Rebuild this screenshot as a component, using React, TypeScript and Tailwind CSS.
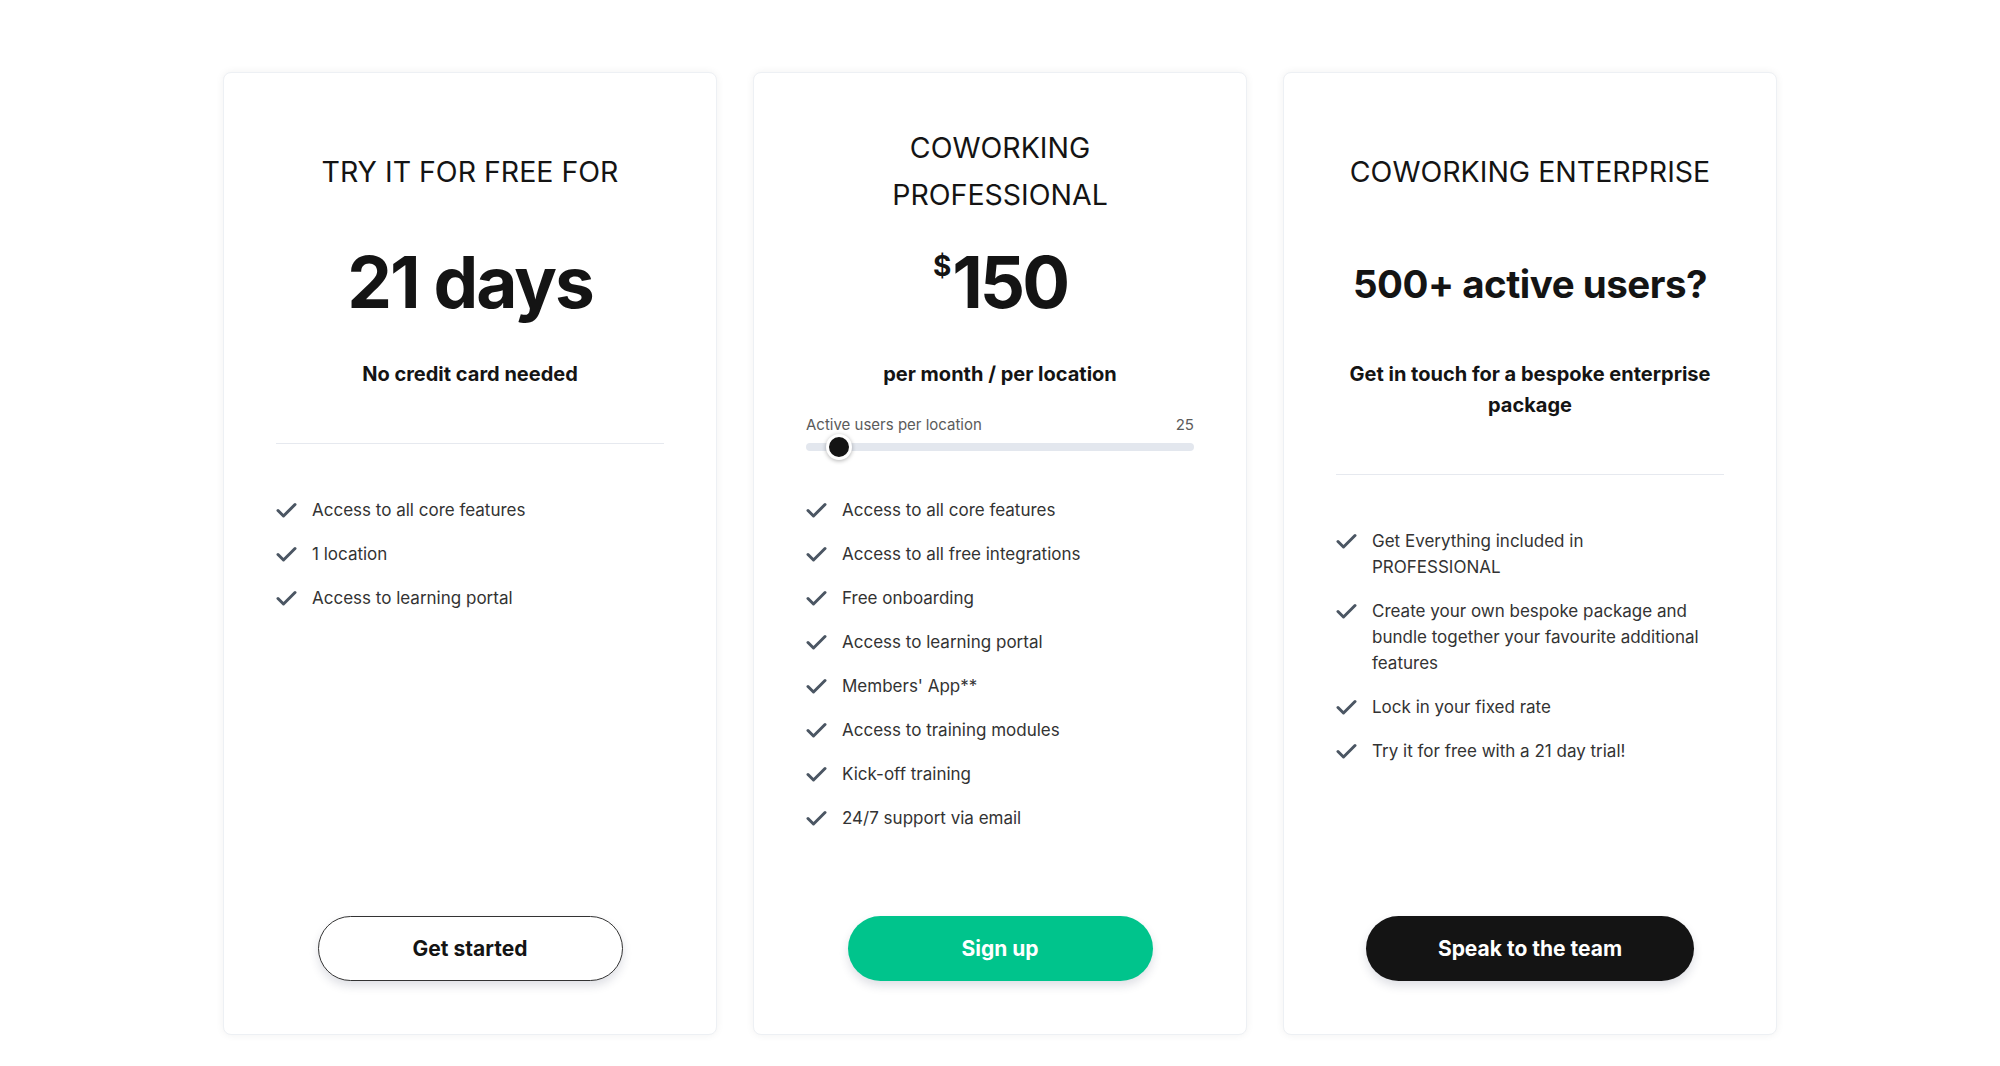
import React from 'react'

const font = { fontFamily: 'Inter, Lato, sans-serif' }

function Check() {
    return (
        <svg className="w-[21px] h-[16px] shrink-0 mt-[5px]" viewBox="0 0 21 16" fill="none">
            <path d="M2 8.5l5.5 5.5L19 2.5" stroke="#4b5663" strokeWidth="3" strokeLinecap="round" strokeLinejoin="round" />
        </svg>
    )
}

function FeatureList({ items }: { items: string[] }) {
    return (
        <ul className="flex flex-col gap-[18px] pr-[12px]">
            {items.map((item, i) => (
                <li key={i} className="flex items-start gap-[15px] text-[17px] leading-[26px] text-[#333]">
                    <Check />
                    <span>{item}</span>
                </li>
            ))}
        </ul>
    )
}

function Divider() {
    return <hr className="border-t border-[#e6e9ef] my-[53px]" />
}

export default function App() {
    return (
        <div className="w-full min-h-screen bg-white" style={font}>
            <div className="flex justify-center pt-[72px]">
                <div className="grid grid-cols-3 gap-[36px]">
                    {/* card 1 */}
                    <div className="w-[494px] h-[963px] bg-white rounded-lg border border-[#edf0f4] shadow-[0_0_8px_rgba(0,0,0,0.06)] px-[52px] pt-[51px] pb-[53px] flex flex-col">
                        <h2 className="h-[94px] flex items-center justify-center text-center text-[28.5px] leading-[47px] text-[#141414]">
                            TRY IT FOR FREE FOR
                        </h2>
                        <div className="h-[72px] mt-[28px] flex items-center justify-center text-[71px] leading-none font-bold tracking-[-2px] text-[#141414]">
                            21 days
                        </div>
                        <p className="mt-[41px] text-center text-[20px] leading-[31px] font-bold text-[#141414]">
                            No credit card needed
                        </p>
                        <Divider />
                        <FeatureList items={['Access to all core features', '1 location', 'Access to learning portal']} />
                        <div className="mt-auto flex justify-center">
                            <button className="min-w-[305px] h-[65px] px-[72px] rounded-full border border-[#333] bg-white text-[21px] font-bold text-[#141414] shadow-[0_5px_10px_rgba(40,50,80,0.15)]">
                                Get started
                            </button>
                        </div>
                    </div>

                    {/* card 2 */}
                    <div className="w-[494px] h-[963px] bg-white rounded-lg border border-[#edf0f4] shadow-[0_0_8px_rgba(0,0,0,0.06)] px-[52px] pt-[51px] pb-[53px] flex flex-col">
                        <h2 className="h-[94px] flex items-center justify-center text-center text-[28.5px] leading-[47px] text-[#141414]">
                            COWORKING
                            <br />
                            PROFESSIONAL
                        </h2>
                        <div className="h-[72px] mt-[28px] flex items-center justify-center font-bold text-[#141414]">
                            <span className="self-start text-[28px] leading-none mt-[6px] mr-[1px]">$</span>
                            <span className="text-[71px] leading-none tracking-[-3px]">150</span>
                        </div>
                        <p className="mt-[41px] text-center text-[20px] leading-[31px] font-bold text-[#141414]">
                            per month / per location
                        </p>
                        <div className="mt-[25px] mb-[46px]">
                            <div className="flex justify-between text-[15px] leading-[20px] text-[#5b5b5b]">
                                <span>Active users per location</span>
                                <span>25</span>
                            </div>
                            <div className="relative mt-[8px] h-[8px] rounded-full bg-[#e3e7ee]">
                                <div className="absolute left-[20px] top-1/2 -translate-y-1/2 w-[26px] h-[26px] rounded-full bg-[#141414] border-[3px] border-white shadow-[0_1px_4px_rgba(0,0,0,0.3)]" />
                            </div>
                        </div>
                        <FeatureList
                            items={[
                                'Access to all core features',
                                'Access to all free integrations',
                                'Free onboarding',
                                'Access to learning portal',
                                "Members' App**",
                                'Access to training modules',
                                'Kick-off training',
                                '24/7 support via email',
                            ]}
                        />
                        <div className="mt-auto flex justify-center">
                            <button className="min-w-[305px] h-[65px] px-[72px] rounded-full bg-[#00c48c] text-[21px] font-bold text-white shadow-[0_5px_10px_rgba(40,50,80,0.15)]">
                                Sign up
                            </button>
                        </div>
                    </div>

                    {/* card 3 */}
                    <div className="w-[494px] h-[963px] bg-white rounded-lg border border-[#edf0f4] shadow-[0_0_8px_rgba(0,0,0,0.06)] px-[52px] pt-[51px] pb-[53px] flex flex-col">
                        <h2 className="h-[94px] flex items-center justify-center text-center text-[28.5px] leading-[47px] text-[#141414]">
                            COWORKING ENTERPRISE
                        </h2>
                        <div className="h-[72px] mt-[28px] pt-[5px] flex items-center justify-center text-[38.5px] leading-none font-bold tracking-[-0.5px] text-[#141414]">
                            500+ active users?
                        </div>
                        <p className="mt-[41px] text-center text-[20px] leading-[31px] font-bold text-[#141414]">
                            Get in touch for a bespoke enterprise package
                        </p>
                        <Divider />
                        <FeatureList
                            items={[
                                'Get Everything included in PROFESSIONAL',
                                'Create your own bespoke package and bundle together your favourite additional features',
                                'Lock in your fixed rate',
                                'Try it for free with a 21 day trial!',
                            ]}
                        />
                        <div className="mt-auto flex justify-center">
                            <button className="min-w-[305px] h-[65px] px-[72px] rounded-full bg-[#141414] text-[21px] font-bold text-white shadow-[0_5px_10px_rgba(40,50,80,0.15)]">
                                Speak to the team
                            </button>
                        </div>
                    </div>
                </div>
            </div>
        </div>
    )
}
